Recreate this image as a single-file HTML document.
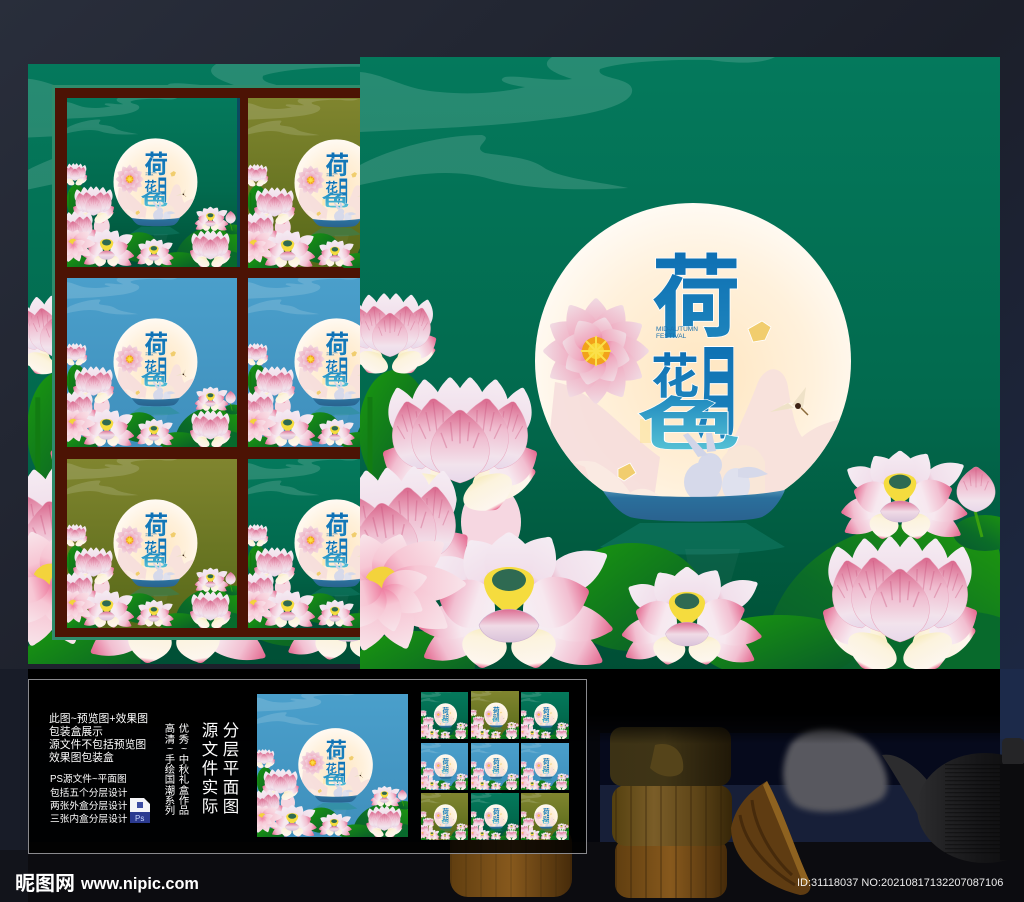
<!DOCTYPE html>
<html lang="zh"><head><meta charset="utf-8"><title>荷花月色</title>
<style>
html,body{margin:0;padding:0;background:#1c2029;width:1024px;height:902px;overflow:hidden}
svg{display:block;position:absolute;left:0;top:0}
text{font-family:"Liberation Sans","Noto Sans CJK SC",sans-serif}
.c{font-family:"Liberation Sans","Noto Sans CJK SC",sans-serif;fill:#fff}
</style></head><body>
<svg width="1024" height="902" viewBox="0 0 1024 902" xmlns="http://www.w3.org/2000/svg">
<defs>
<linearGradient id="bgG" x1="0" y1="0" x2="0" y2="1"><stop offset="0" stop-color="#04795c"/><stop offset=".55" stop-color="#026a4e"/><stop offset="1" stop-color="#004f35"/></linearGradient>
<linearGradient id="bgB" x1="0" y1="0" x2="0" y2="1"><stop offset="0" stop-color="#4a9fcb"/><stop offset="1" stop-color="#3f8fbc"/></linearGradient>
<linearGradient id="bgO" x1="0" y1="0" x2="0" y2="1"><stop offset="0" stop-color="#80852f"/><stop offset="1" stop-color="#566818"/></linearGradient>
<linearGradient id="page" x1="0" y1="0" x2="1" y2="1"><stop offset="0" stop-color="#292e3b"/><stop offset=".5" stop-color="#1c1f2a"/><stop offset="1" stop-color="#1c2a4a"/></linearGradient>
<linearGradient id="gB" x1="0" y1="0" x2="0" y2="1"><stop offset="0" stop-color="#f5ecf3"/><stop offset=".7" stop-color="#f1dfeb"/><stop offset="1" stop-color="#e892ad"/></linearGradient>
<linearGradient id="gP" x1="0" y1="0" x2="0" y2="1"><stop offset="0" stop-color="#d9678c"/><stop offset=".38" stop-color="#f0bdd0"/><stop offset=".75" stop-color="#f2e3ec"/><stop offset="1" stop-color="#e8d8ea"/></linearGradient>
<linearGradient id="gO" x1="0" y1="0" x2="0" y2="1"><stop offset="0" stop-color="#e4688f"/><stop offset=".3" stop-color="#f2bfd1"/><stop offset=".65" stop-color="#f7e8ef"/><stop offset="1" stop-color="#f6eef3"/></linearGradient>
<linearGradient id="gC" x1="0" y1="0" x2="0" y2="1"><stop offset="0" stop-color="#e9658d"/><stop offset=".12" stop-color="#fdf6ee"/><stop offset=".75" stop-color="#fcf3dd"/><stop offset="1" stop-color="#f7ecc0"/></linearGradient>
<linearGradient id="gW" x1="0" y1="0" x2="0" y2="1"><stop offset="0" stop-color="#f1dbe3"/><stop offset=".6" stop-color="#f0a9bf"/><stop offset="1" stop-color="#e65f8a"/></linearGradient>
<linearGradient id="gW2" x1="0" y1="0" x2="0" y2="1"><stop offset="0" stop-color="#f8e4ea"/><stop offset=".6" stop-color="#f7c6d4"/><stop offset="1" stop-color="#ee7da0"/></linearGradient>
<linearGradient id="gF" x1="0" y1="0" x2="0" y2="1"><stop offset="0" stop-color="#dd6e93"/><stop offset=".5" stop-color="#f0dbe6"/><stop offset="1" stop-color="#d9c3da"/></linearGradient>
<linearGradient id="gL" x1="0" y1="0" x2="1" y2="1"><stop offset="0" stop-color="#1a9a0e"/><stop offset="1" stop-color="#07562c"/></linearGradient>
<linearGradient id="gL2" x1="1" y1="0" x2="0" y2="1"><stop offset="0" stop-color="#1f9a0c"/><stop offset=".6" stop-color="#0b6c28"/><stop offset="1" stop-color="#075a30"/></linearGradient>
<linearGradient id="gT" x1="0" y1="0" x2="0" y2="1"><stop offset="0" stop-color="#0e6fb3"/><stop offset="1" stop-color="#1f86bd"/></linearGradient>
<linearGradient id="gT2" x1="0" y1="0" x2="0" y2="1"><stop offset="0" stop-color="#1c86bd"/><stop offset="1" stop-color="#5cc8d8"/></linearGradient>
<radialGradient id="gM" cx=".52" cy=".55" r=".55"><stop offset="0" stop-color="#ffe6c0"/><stop offset=".65" stop-color="#fff1dc"/><stop offset="1" stop-color="#fffaf3"/></radialGradient>
<linearGradient id="gBowl" x1="0" y1="0" x2="0" y2="1"><stop offset="0" stop-color="#4f92b4"/><stop offset=".25" stop-color="#2a6f9c"/><stop offset="1" stop-color="#2a628f"/></linearGradient>
<linearGradient id="fade" x1="0" y1="0" x2="0" y2="1"><stop offset="0" stop-color="#000"/><stop offset=".6" stop-color="#000"/><stop offset="1" stop-color="#000" stop-opacity="0"/></linearGradient>
<linearGradient id="ck1" x1="0" y1="0" x2="1" y2="0"><stop offset="0" stop-color="#3c3215"/><stop offset=".45" stop-color="#3f3416"/><stop offset="1" stop-color="#201808"/></linearGradient>
<linearGradient id="ck2" x1="0" y1="0" x2="1" y2="0"><stop offset="0" stop-color="#54400f"/><stop offset=".35" stop-color="#7a5d28"/><stop offset=".7" stop-color="#5e4518"/><stop offset="1" stop-color="#362608"/></linearGradient>
<linearGradient id="ck3" x1="0" y1="0" x2="1" y2="0"><stop offset="0" stop-color="#603e10"/><stop offset=".5" stop-color="#87591d"/><stop offset="1" stop-color="#462b0a"/></linearGradient>
<linearGradient id="pot" x1="0" y1="0" x2="1" y2="0"><stop offset="0" stop-color="#2c2c2e"/><stop offset=".45" stop-color="#161618"/><stop offset="1" stop-color="#050506"/></linearGradient>
<pattern id="rid" width="4" height="4" patternUnits="userSpaceOnUse"><rect width="4" height="1.3" fill="#000" opacity=".45"/></pattern>
<pattern id="ver" width="15" height="10" patternUnits="userSpaceOnUse"><rect width="2" height="10" fill="#2a1a05" opacity=".3"/></pattern>
<filter id="bl" x="-20%" y="-20%" width="140%" height="140%"><feGaussianBlur stdDeviation="3"/></filter>
<clipPath id="mc"><circle cx="333" cy="304" r="158"/></clipPath>
<clipPath id="lp"><rect x="28" y="64" width="332" height="600"/></clipPath>
<clipPath id="fr"><rect x="55" y="88" width="305" height="549"/></clipPath>
<path id="p" d="M0 0C-36 -12 -44 -58 -6 -92Q0 -100 6 -92C44 -58 36 -12 0 0Z"/>
<g id="pf">
<use href="#p" fill="url(#gP)" stroke="#e9a9c0" stroke-width=".6"/>
<path d="M-10 -80L-8 -55M0 -92L0 -52M10 -80L8 -55M-20 -66L-14 -46M20 -66L14 -46" stroke="#c84f7b" stroke-width="1.5" opacity=".35" fill="none"/>
</g>
<g id="la">
<use href="#p" fill="url(#gC)" transform="translate(12,-18) rotate(76) scale(.65,.68)"/>
<use href="#p" fill="url(#gC)" transform="translate(-12,-18) rotate(-76) scale(.6,.62)"/>
<use href="#p" fill="url(#gB)" transform="translate(-50,-66) rotate(-14) scale(.5,.55)"/>
<use href="#p" fill="url(#gB)" transform="translate(-30,-72) rotate(-6) scale(.52,.56)"/>
<use href="#p" fill="url(#gB)" transform="translate(-10,-72) scale(.52,.58)"/>
<use href="#p" fill="url(#gB)" transform="translate(10,-72) scale(.52,.58)"/>
<use href="#p" fill="url(#gB)" transform="translate(30,-72) rotate(6) scale(.52,.56)"/>
<use href="#p" fill="url(#gB)" transform="translate(50,-66) rotate(14) scale(.5,.55)"/>
<use href="#p" fill="url(#gO)" transform="translate(-30,-28) rotate(-62) scale(.62,.55)"/>
<use href="#p" fill="url(#gO)" transform="translate(30,-28) rotate(62) scale(.62,.55)"/>
<use href="#pf" transform="translate(-38,-36) rotate(-13) scale(.72,.72)"/>
<use href="#pf" transform="translate(38,-36) rotate(13) scale(.72,.72)"/>
<use href="#p" fill="url(#gC)" transform="translate(-20,-28) rotate(-152) scale(.85,.38)"/>
<use href="#p" fill="url(#gC)" transform="translate(20,-28) rotate(152) scale(.85,.38)"/>
<use href="#pf" transform="translate(-18,-32) rotate(-7) scale(.85,.78)"/>
<use href="#pf" transform="translate(18,-32) rotate(7) scale(.85,.78)"/>
<use href="#pf" transform="translate(0,-22) scale(.95,.76)"/>
</g>
<g id="lb">
<use href="#p" fill="url(#gO)" transform="translate(22,36) rotate(118) scale(.62,.84)"/>
<use href="#p" fill="url(#gO)" transform="translate(-22,36) rotate(-118) scale(.58,.74)"/>
<use href="#p" fill="url(#gO)" transform="translate(28,28) rotate(100) scale(.62,.8)"/>
<use href="#p" fill="url(#gO)" transform="translate(-28,28) rotate(-100) scale(.58,.66)"/>
<use href="#p" fill="url(#gC)" transform="translate(-22,40) rotate(-172) scale(.72,.42)"/>
<use href="#p" fill="url(#gC)" transform="translate(22,40) rotate(172) scale(.72,.42)"/>
<use href="#p" fill="url(#gB)" transform="translate(35,0) rotate(62) scale(.62,.74)"/>
<use href="#p" fill="url(#gB)" transform="translate(-30,0) rotate(-62) scale(.58,.6)"/>
<use href="#p" fill="url(#gB)" transform="translate(10,0) rotate(32) scale(.7,.62)"/>
<use href="#p" fill="url(#gB)" transform="translate(-10,0) rotate(-32) scale(.7,.58)"/>
<use href="#p" fill="url(#gB)" transform="translate(0,0) scale(.8,.58)"/>
<use href="#p" fill="url(#gO)" transform="translate(14,24) rotate(72) scale(.82,.72)"/>
<use href="#p" fill="url(#gO)" transform="translate(-14,24) rotate(-72) scale(.78,.62)"/>
<path d="M-25 -6C-25 -26 25 -26 25 -6C25 10 8 22 0 26C-8 22 -25 10 -25 -6Z" fill="#f5dc3e"/>
<ellipse cx="0" cy="-8" rx="17" ry="11" fill="#2f6a52"/>
<path d="M-30 37C-20 16 20 16 30 37C24 60 -24 60 -30 37Z" fill="url(#gF)" stroke="#cdb1cf" stroke-width=".6"/>
</g>
<g id="lc">
<use href="#p" fill="url(#gW)" transform="rotate(0) scale(.5,.55)"/><use href="#p" fill="url(#gW)" transform="rotate(30) scale(.5,.55)"/><use href="#p" fill="url(#gW)" transform="rotate(60) scale(.5,.55)"/><use href="#p" fill="url(#gW)" transform="rotate(90) scale(.5,.55)"/><use href="#p" fill="url(#gW)" transform="rotate(120) scale(.5,.55)"/><use href="#p" fill="url(#gW)" transform="rotate(150) scale(.5,.55)"/><use href="#p" fill="url(#gW)" transform="rotate(180) scale(.5,.55)"/><use href="#p" fill="url(#gW)" transform="rotate(210) scale(.5,.55)"/><use href="#p" fill="url(#gW)" transform="rotate(240) scale(.5,.55)"/><use href="#p" fill="url(#gW)" transform="rotate(270) scale(.5,.55)"/><use href="#p" fill="url(#gW)" transform="rotate(300) scale(.5,.55)"/><use href="#p" fill="url(#gW)" transform="rotate(330) scale(.5,.55)"/>
<use href="#p" fill="url(#gW)" transform="rotate(15) scale(.45,.36)"/><use href="#p" fill="url(#gW)" transform="rotate(60) scale(.45,.36)"/><use href="#p" fill="url(#gW)" transform="rotate(105) scale(.45,.36)"/><use href="#p" fill="url(#gW)" transform="rotate(150) scale(.45,.36)"/><use href="#p" fill="url(#gW)" transform="rotate(195) scale(.45,.36)"/><use href="#p" fill="url(#gW)" transform="rotate(240) scale(.45,.36)"/><use href="#p" fill="url(#gW)" transform="rotate(285) scale(.45,.36)"/><use href="#p" fill="url(#gW)" transform="rotate(330) scale(.45,.36)"/>
<circle r="14" fill="#f2a21a"/><circle r="8" fill="#f9d634"/>
<path d="M0 0L0 -15M0 0L10 -10M0 0L15 0M0 0L10 10M0 0L0 15M0 0L-10 10M0 0L-15 0M0 0L-10 -10" stroke="#fbe04a" stroke-width="2"/>
</g>
<g id="ld">
<use href="#p" fill="url(#gW2)" transform="rotate(-90) scale(.55,.6)"/><use href="#p" fill="url(#gW2)" transform="rotate(-55) scale(.55,.6)"/><use href="#p" fill="url(#gW2)" transform="rotate(-20) scale(.5,.5)"/><use href="#p" fill="url(#gW2)" transform="rotate(20) scale(.5,.5)"/><use href="#p" fill="url(#gW2)" transform="rotate(55) scale(.55,.68)"/><use href="#p" fill="url(#gW2)" transform="rotate(90) scale(.55,.76)"/><use href="#p" fill="url(#gW2)" transform="rotate(125) scale(.55,.72)"/><use href="#p" fill="url(#gW2)" transform="rotate(160) scale(.55,.65)"/><use href="#p" fill="url(#gW2)" transform="rotate(195) scale(.55,.65)"/><use href="#p" fill="url(#gW2)" transform="rotate(230) scale(.55,.65)"/>
<path d="M-14 -6C-8 -18 8 -20 14 -6L0 6Z" fill="#f3d33c"/>
<use href="#p" fill="url(#gW2)" transform="translate(0,4) rotate(75) scale(.38,.42)"/><use href="#p" fill="url(#gW2)" transform="translate(0,4) rotate(120) scale(.38,.42)"/><use href="#p" fill="url(#gW2)" transform="translate(0,4) rotate(165) scale(.38,.42)"/><use href="#p" fill="url(#gW2)" transform="translate(0,4) rotate(210) scale(.38,.42)"/><use href="#p" fill="url(#gW2)" transform="translate(0,4) rotate(255) scale(.38,.42)"/>
</g>
<g id="cr"><ellipse cx="0" cy="0" rx="11" ry="3.5" fill="#fff6e6"/><path d="M-2 -1L12 -19L9 2Z M0 2L-24 6L-6 -3Z" fill="#efe2c8"/><circle cx="4" cy="0" r="3" fill="#3d2315"/><path d="M7 2L14 9" stroke="#8a6a3a" stroke-width="1.5"/></g>
<symbol id="art" viewBox="0 0 640 612" preserveAspectRatio="none">
<g fill="#fff" opacity=".14">
<path d="M0 15C25 17 45 33 80 35C110 38 140 36 165 30C150 28 135 24 145 20C160 18 190 25 212 22C190 15 180 8 192 0L415 0C400 8 370 6 350 3C310 2 260 5 240 12C235 22 270 20 272 32C275 48 230 58 190 62C130 70 60 72 0 75Z"/>
<path d="M0 108C30 92 80 78 122 78C135 82 110 90 125 96C150 100 170 100 186 112C205 122 240 125 268 131C215 134 165 132 130 122C90 110 45 118 0 128Z"/>
</g>
<path d="M280 466L386 466L425 490C380 500 290 500 240 490Z" fill="#1c8c7c" opacity=".35"/>
<path d="M325 492L380 492L365 545L335 545Z" fill="#fff" opacity=".04"/>
<ellipse cx="35" cy="373" rx="36" ry="60" fill="url(#gL)"/>
<path d="M10 340L10 500" stroke="#127c12" stroke-width="5"/>
<path d="M0 450C20 430 30 410 55 415" stroke="#0d6a2c" stroke-width="8" fill="none"/>
<ellipse cx="272" cy="540" rx="72" ry="54" fill="url(#gL)"/>
<path d="M405 612C400 540 455 485 520 470C590 460 640 470 640 500L640 612Z" fill="url(#gL2)"/>
<ellipse cx="625" cy="476" rx="32" ry="18" fill="url(#gL2)"/>
<ellipse cx="420" cy="590" rx="80" ry="32" fill="url(#gL)"/>
<ellipse cx="55" cy="608" rx="60" ry="34" fill="url(#gL)"/>
<ellipse cx="600" cy="590" rx="70" ry="36" fill="#086a2c"/>
<path d="M614 450L622 480" stroke="#3aa00f" stroke-width="3"/>
<circle cx="333" cy="304" r="158" fill="url(#gM)"/>
<g clip-path="url(#mc)">
<path d="M195 325C230 330 270 380 300 400L290 470L180 470Z" fill="#f6dcdc" opacity=".85"/>
<path d="M215 465C200 410 205 400 235 405C265 420 280 445 280 470Z" fill="#faeae2"/>
<path d="M258 460C262 430 285 425 300 440C315 455 320 470 320 470Z" fill="#fbece2"/>
<path d="M335 460C365 400 385 360 398 325C408 305 425 310 428 330C432 355 435 370 442 380C456 368 475 362 490 362C480 410 440 450 395 470Z" fill="#f8e2dc"/>
<path d="M360 405C370 385 395 380 405 405L405 470L350 470Z" fill="#f9e7d8"/>
<path d="M150 380L225 410L245 470L180 470Z" fill="#f9dcd8" opacity=".7"/>
<rect x="280" y="362" width="18" height="24" fill="#fbe08c" opacity=".45"/>
</g>
<path d="M388 272l14 -8 9 6-6 13-12 2Z" fill="#f1cd6e" stroke="#fff" stroke-width=".8"/>
<path d="M258 412l12 -6 6 10-12 8-6 -4Z" fill="#f1cd6e" stroke="#fff" stroke-width=".8"/>
<use href="#lc" transform="translate(236,294)"/>
<g stroke="#fff" stroke-width="1.5" paint-order="stroke">
<text transform="translate(291,272)" font-size="90" font-weight="700" fill="url(#gT)">荷</text>
<text x="291" y="336" font-size="48" font-weight="700" fill="url(#gT)">花</text>
<text transform="translate(336,372) scale(.6,1.38)" font-size="74" font-weight="700" fill="url(#gT)">月</text>
<text transform="translate(276,388) scale(1.42,.78)" font-size="74" font-weight="700" fill="url(#gT2)">色</text>
</g>
<g fill="#1a70ad" font-size="6.5"><text x="296" y="274">MID-AUTUMN</text><text x="296" y="281">FESTIVAL</text></g>
<use href="#cr" transform="translate(434,349)"/>
<ellipse cx="343" cy="425" rx="19" ry="20" fill="#d6d9ea"/>
<ellipse cx="350" cy="408" rx="12" ry="12" fill="#d6d9ea"/>
<path d="M338 400L323 378L328 376L348 398ZM347 395L346 376L352 376L356 394Z" fill="#d1d5e8"/>
<ellipse cx="376" cy="428" rx="14" ry="17" fill="#dfe1ee"/>
<path d="M378 412C392 407 400 412 408 417C396 421 388 422 378 420Z" fill="#d6d9ea"/>
<path d="M243 434C290 442 380 442 425 433C420 445 412 455 402 460C388 466 290 466 270 460C258 455 250 445 243 434Z" fill="url(#gBowl)"/>
<use href="#la" transform="translate(30,313) scale(.6)"/>
<ellipse cx="131" cy="465" rx="30" ry="38" fill="#f6d7e1"/>
<use href="#la" transform="translate(100,448)"/>
<use href="#la" transform="translate(35,545) rotate(-8) scale(1.05)"/>
<use href="#lb" transform="translate(149,531)"/>
<use href="#ld" transform="translate(22,527) scale(1.15,1.1)"/>
<use href="#lb" transform="translate(327,550) scale(.72)"/>
<use href="#lb" transform="translate(540,430) scale(.65)"/>
<use href="#pf" transform="translate(616,455) scale(.62,.47)"/>
<use href="#la" transform="translate(540,607)"/>
</symbol>
<g id="ps"><path d="M0 0H14L20 6V14H0Z" fill="#f4f4f8"/><rect x="0" y="14" width="20" height="11" fill="#2b3a90"/><text x="5" y="23" font-size="8" fill="#c8d6ff">Ps</text><rect x="7" y="4" width="6" height="6" fill="#3d4da3"/></g>
</defs>

<!-- page -->
<rect width="1024" height="902" fill="url(#page)"/>
<rect x="0" y="669" width="28" height="233" fill="#181c28"/>
<rect x="0" y="850" width="1024" height="52" fill="#12141b"/>
<!-- photo -->
<rect x="28" y="669" width="972" height="180" fill="#05060c"/>
<rect x="600" y="733" width="400" height="110" fill="#060a1c"/>
<rect x="600" y="785" width="350" height="57" fill="#171f38"/>
<rect x="28" y="842" width="996" height="60" fill="#0c0c10"/>
<rect x="1000" y="669" width="24" height="70" fill="#1c2a4a"/>
<path d="M790 745C805 722 850 725 870 745C885 760 895 790 880 800C850 815 810 815 795 805C780 790 780 765 790 745Z" fill="#58585e" filter="url(#bl)"/>
<path d="M882 755C895 752 915 765 927 780L935 795L922 822C910 800 895 775 882 755Z" fill="#2c2c2e"/>
<ellipse cx="985" cy="808" rx="68" ry="55" fill="url(#pot)"/>
<rect x="945" y="762" width="79" height="92" fill="url(#rid)" opacity=".8"/>
<rect x="1002" y="738" width="22" height="28" rx="5" fill="#252527"/>
<rect x="1000" y="764" width="24" height="96" fill="#0c0c0e"/>
<!-- mooncakes -->
<rect x="450" y="825" width="122" height="72" rx="18" fill="url(#ck3)"/>
<rect x="450" y="825" width="122" height="72" rx="18" fill="url(#ver)" opacity=".5"/>
<rect x="615" y="838" width="112" height="60" rx="14" fill="url(#ck3)"/>
<rect x="615" y="838" width="112" height="60" rx="14" fill="url(#ver)"/>
<rect x="612" y="785" width="120" height="61" rx="14" fill="url(#ck2)"/>
<rect x="612" y="785" width="120" height="61" rx="14" fill="url(#ver)"/>
<rect x="610" y="727" width="121" height="59" rx="12" fill="url(#ck1)"/>
<path d="M655 745C675 740 685 755 683 770C680 778 662 780 650 768Z" fill="#55441a"/>
<path d="M767 781C748 792 735 808 731 828C732 860 760 885 800 895C808 895 812 890 810 882C795 850 785 815 767 781Z" fill="#5f3c12"/>
<path d="M767 781C785 815 795 850 810 882L804 886C790 850 775 815 763 785Z" fill="#8e6220"/>
<path d="M740 815C745 845 770 870 795 885M752 800C755 830 775 860 792 875" stroke="#3c2208" stroke-width="3" fill="none" opacity=".7"/>

<!-- black band top -->
<rect x="28" y="669" width="972" height="75" fill="url(#fade)"/>

<!-- left panel -->
<rect x="28" y="64" width="332" height="600" fill="url(#bgG)"/>
<g clip-path="url(#lp)"><use href="#art" x="28" y="64" width="627" height="600"/></g>
<rect x="52" y="85" width="308" height="555" fill="#2f8c6c"/>
<rect x="55" y="88" width="305" height="549" fill="#4c1304"/>
<g clip-path="url(#fr)">
<rect x="67" y="98" width="170" height="169" fill="url(#bgG)"/><use href="#art" x="67" y="98" width="170" height="169"/>
<rect x="237" y="98" width="3" height="169" fill="#0a4a60"/>
<rect x="248" y="98" width="170" height="169" fill="url(#bgO)"/><use href="#art" x="248" y="99" width="170" height="169"/>
<rect x="67" y="278" width="170" height="169" fill="url(#bgB)"/><use href="#art" x="67" y="278" width="170" height="169"/>
<rect x="248" y="278" width="170" height="169" fill="url(#bgB)"/><use href="#art" x="248" y="278" width="170" height="169"/>
<rect x="67" y="459" width="170" height="169" fill="url(#bgO)"/><use href="#art" x="67" y="459" width="170" height="169"/>
<rect x="248" y="459" width="170" height="169" fill="url(#bgG)"/><use href="#art" x="248" y="459" width="170" height="169"/>
</g>

<!-- main panel -->
<rect x="360" y="57" width="640" height="612" fill="url(#bgG)"/>
<use href="#art" x="360" y="57" width="640" height="612"/>

<!-- info box -->
<rect x="28.5" y="679.5" width="558" height="174" fill="#000" fill-opacity=".82" stroke="#8a8a8e" stroke-width="1"/>
<g font-size="10.8">
<text class="c" x="49" y="722">此图~预览图+效果图</text>
<text class="c" x="49" y="735">包装盒展示</text>
<text class="c" x="49" y="748">源文件不包括预览图</text>
<text class="c" x="49" y="761">效果图包装盒</text>
</g>
<g font-size="9.7">
<text class="c" x="50" y="782">PS源文件~平面图</text>
<text class="c" x="50" y="796">包括五个分层设计</text>
<text class="c" x="50" y="809">两张外盒分层设计</text>
<text class="c" x="50" y="822">三张内盒分层设计</text>
</g>
<use href="#ps" transform="translate(130,798)"/>
<g font-size="10.4" text-anchor="middle">
<text class="c" x="184" y="732">优</text><text class="c" x="184" y="743">秀</text><text class="c" x="184" y="752">~</text><text class="c" x="184" y="763">中</text><text class="c" x="184" y="773">秋</text><text class="c" x="184" y="783">礼</text><text class="c" x="184" y="794">盒</text><text class="c" x="184" y="804">作</text><text class="c" x="184" y="814">品</text>
<text class="c" x="170" y="732">高</text><text class="c" x="170" y="743">清</text><text class="c" x="170" y="752">~</text><text class="c" x="170" y="763">手</text><text class="c" x="170" y="773">绘</text><text class="c" x="170" y="783">国</text><text class="c" x="170" y="794">潮</text><text class="c" x="170" y="804">系</text><text class="c" x="170" y="814">列</text>
</g>
<g font-size="16.5" text-anchor="middle">
<text class="c" x="231" y="736">分</text><text class="c" x="231" y="755">层</text><text class="c" x="231" y="774">平</text><text class="c" x="231" y="793">面</text><text class="c" x="231" y="812">图</text>
<text class="c" x="210" y="736">源</text><text class="c" x="210" y="755">文</text><text class="c" x="210" y="774">件</text><text class="c" x="210" y="793">实</text><text class="c" x="210" y="812">际</text>
</g>
<rect x="257" y="694" width="151" height="143" fill="url(#bgB)"/><use href="#art" x="257" y="694" width="151" height="143"/>
<rect x="421" y="692" width="47" height="47" fill="url(#bgG)"/><use href="#art" x="421" y="692" width="47" height="47"/>
<rect x="471" y="691" width="48" height="48" fill="url(#bgO)"/><use href="#art" x="471" y="691" width="48" height="48"/>
<rect x="521" y="692" width="48" height="47" fill="url(#bgG)"/><use href="#art" x="521" y="692" width="48" height="47"/>
<rect x="421" y="743" width="47" height="47" fill="url(#bgB)"/><use href="#art" x="421" y="743" width="47" height="47"/>
<rect x="471" y="743" width="48" height="47" fill="url(#bgB)"/><use href="#art" x="471" y="743" width="48" height="47"/>
<rect x="521" y="743" width="48" height="47" fill="url(#bgB)"/><use href="#art" x="521" y="743" width="48" height="47"/>
<rect x="421" y="793" width="47" height="47" fill="url(#bgO)"/><use href="#art" x="421" y="793" width="47" height="47"/>
<rect x="471" y="793" width="48" height="47" fill="url(#bgG)"/><use href="#art" x="471" y="793" width="48" height="47"/>
<rect x="521" y="793" width="48" height="47" fill="url(#bgO)"/><use href="#art" x="521" y="793" width="48" height="47"/>

<!-- watermarks -->
<text class="c" x="15" y="890" font-size="20" font-weight="700">昵图网</text>
<text class="c" x="81" y="889" font-size="16.3" font-weight="700">www.nipic.com</text>
<text class="c" x="797" y="886" font-size="11" fill-opacity=".92">ID:31118037 NO:20210817132207087106</text>
</svg>
</body></html>
